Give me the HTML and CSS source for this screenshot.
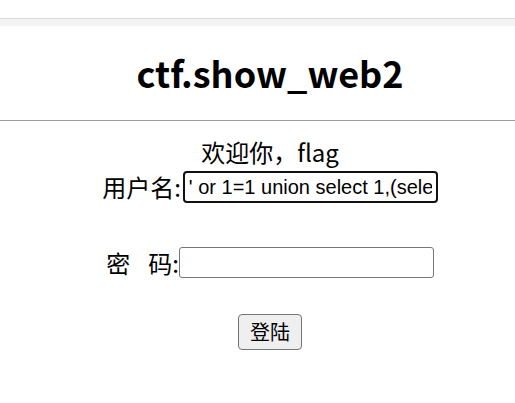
FILE: index.html
```html
<!DOCTYPE html>
<html lang="zh-CN">
<head>
    <meta charset="UTF-8">
    <title>ctf.show_web2</title>
    <link rel="stylesheet" href="styles.css">
</head>
<body>
    <div class="topbar"></div>

    <header class="title-bar">
        <h2>ctf.show_web2</h2>
    </header>
    <div class="rule"></div>

    <form class="login">
        <p class="welcome">欢迎你，flag</p>
        <div class="row row-user">
            <label for="username">用户名:</label><input id="username" class="field field-focus" type="text" value="' or 1=1 union select 1,(select flag from flag)#">
        </div>
        <div class="row row-pass">
            <label for="password"><span class="gap">密</span>码:</label><input id="password" class="field" type="password">
        </div>
        <div class="actions">
            <button type="submit" class="btn">登陆</button>
        </div>
    </form>
</body>
</html>
```

FILE: styles.css
```css
body {
    margin: 0;
    background: #fff;
    color: #000;
    font-family: "Noto Sans CJK SC", "Noto Sans", sans-serif;
    font-size: 24px;
}

.topbar {
    margin-top: 18px;
    height: 7px;
    border-top: 1px solid #d8d8d8;
    background: #f3f3f3;
}

.title-bar {
    height: 94px;
    padding-left: 25px;
    display: flex;
    align-items: center;
    justify-content: center;
}

.title-bar h2 {
    margin: 0;
    font-size: 36px;
    font-weight: bold;
    line-height: 36px;
    margin-top: -2px;
}

.rule {
    height: 1px;
    background: #9c9c9c;
}

.login {
    padding-left: 25px;
    display: flex;
    flex-direction: column;
    align-items: center;
}

.welcome {
    margin: 16px 0 0;
    line-height: 30px;
}

.row {
    display: flex;
    align-items: center;
}

.row label {
    line-height: 30px;
}

.gap {
    margin-right: 18px;
}

.row-user {
    margin-top: 4px;
}

.row-pass {
    margin-top: 44px;
}

.field {
    box-sizing: border-box;
    width: 255px;
    height: 31px;
    margin: 0;
    padding: 1px 4px;
    font-family: "Liberation Sans", Arial, sans-serif;
    font-size: 20px;
    color: #000;
    background: #fff;
    border: 1px solid #767676;
    border-radius: 3px;
    outline: none;
}

.field-focus {
    height: 32px;
    margin-left: 2px;
    border: 2px solid #111;
    border-radius: 4px;
    padding: 1px 4px;
}

.actions {
    margin-top: 34px;
}

.btn {
    box-sizing: border-box;
    width: 64px;
    height: 36px;
    padding: 0;
    font-family: "Noto Sans CJK SC", sans-serif;
    font-size: 20px;
    color: #000;
    background: #efefef;
    border: 1px solid #767676;
    border-radius: 4px;
}
```
